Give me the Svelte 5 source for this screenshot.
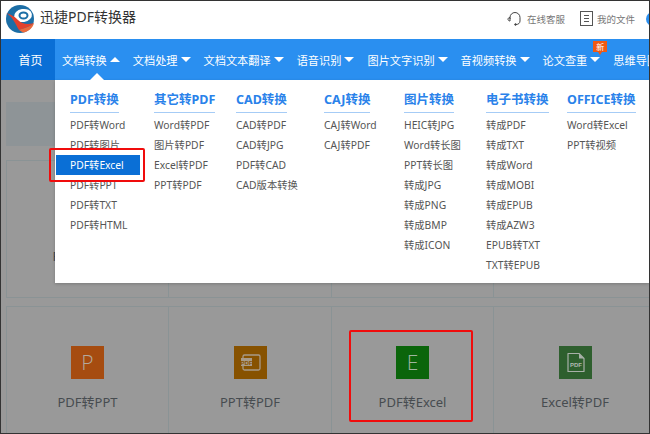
<script>
  const tabs = [
    { label: '文档转换', open: true },
    { label: '文档处理' },
    { label: '文档文本翻译' },
    { label: '语音识别' },
    { label: '图片文字识别' },
    { label: '音视频转换' },
    { label: '论文查重', badge: '新' }
  ];

  const groups = [
    { title: 'PDF转换', items: ['PDF转Word', 'PDF转图片', 'PDF转Excel', 'PDF转PPT', 'PDF转TXT', 'PDF转HTML'] },
    { title: '其它转PDF', items: ['Word转PDF', '图片转PDF', 'Excel转PDF', 'PPT转PDF'] },
    { title: 'CAD转换', items: ['CAD转PDF', 'CAD转JPG', 'PDF转CAD', 'CAD版本转换'] },
    { title: 'CAJ转换', items: ['CAJ转Word', 'CAJ转PDF'] },
    { title: '图片转换', items: ['HEIC转JPG', 'Word转长图', 'PPT转长图', '转成JPG', '转成PNG', '转成BMP', '转成ICON'] },
    { title: '电子书转换', items: ['转成PDF', '转成TXT', '转成Word', '转成MOBI', '转成EPUB', '转成AZW3', 'EPUB转TXT', 'TXT转EPUB'] },
    { title: 'OFFICE转换', items: ['Word转Excel', 'PPT转视频'] }
  ];
</script>

<div class="window">
  <header class="top">
    <svg class="logo" width="30" height="30" viewBox="0 0 30 30">
      <circle cx="15" cy="15" r="14" fill="#1c6ea6" />
      <ellipse cx="18" cy="11.5" rx="9" ry="6.5" fill="#fff" transform="rotate(-10 18 11.5)" />
      <ellipse cx="18.5" cy="11.5" rx="4" ry="3" fill="none" stroke="#1c6ea6" stroke-width="2" />
      <path d="M1 9C7 12 10 19 14 26C19 24 25 23 29 19C22 21 17 20 13 16C9 12 5 10 1 9Z" fill="#e2402c" />
      <path d="M14 26C19 24 25 23 29 19C28 24 23 28 18 28.500Z" fill="#ec6a3c" />
    </svg>
    <div class="title">迅捷PDF转换器</div>
    <div class="tools">
      <svg class="headset" width="16" height="16" viewBox="0 0 16 16" fill="none" stroke="#444" stroke-width="1">
        <path d="M3 8V6.500A5 5 0 0 1 13 6.500V10C13 12 11.500 13.500 9 13.500" />
        <path d="M3 6.500C1.500 6.500 1 7.500 1 8.300S1.800 10 3 10Z" />
        <circle cx="8.500" cy="13.500" r=".8" fill="#444" />
      </svg>
      <span class="tool-text">在线客服</span>
      <svg class="file" width="13" height="15" viewBox="0 0 13 15" fill="none" stroke="#555" stroke-width="1">
        <rect x=".5" y=".5" width="12" height="14" />
        <path d="M4 4.500H9M4 7.500H9M4 10.500H9" />
      </svg>
      <span class="tool-text">我的文件</span>
      <span class="avatar"></span>
    </div>
  </header>

  <nav class="nav">
    <div class="home">首页</div>
    {#each tabs as tab}
      <div class="tab">
        {tab.label}
        <span class="arrow" class:up={tab.open}></span>
        {#if tab.badge}
          <span class="badge">{tab.badge}</span>
        {/if}
      </div>
    {/each}
    <div class="tab">思维导图</div>
  </nav>

  <main class="page">
    <div class="band"></div>
    <div class="cards">
      <div class="card first"><span class="card-label">PDF转Word</span></div>
      <div class="card"></div>
      <div class="card"></div>
      <div class="card"></div>
    </div>
    <div class="cards">
      <div class="card tool">
        <div class="icon ppt">P</div>
        <div class="tool-name">PDF转PPT</div>
      </div>
      <div class="card tool">
        <div class="icon ppt-pdf">
          <svg width="33" height="33" viewBox="0 0 33 33" fill="none">
            <rect x="9" y="9" width="17" height="15" rx="1.500" stroke="#a89a88" stroke-width="1.300" />
            <rect x="7" y="12" width="11" height="8" fill="#a89a88" />
            <text x="12.500" y="18.500" text-anchor="middle" class="mini dark">PDF</text>
          </svg>
        </div>
        <div class="tool-name">PPT转PDF</div>
      </div>
      <div class="card tool">
        <div class="icon xls">E</div>
        <div class="tool-name">PDF转Excel</div>
      </div>
      <div class="card tool">
        <div class="icon xls-pdf">
          <svg width="33" height="33" viewBox="0 0 33 33" fill="none">
            <path d="M9 7.500H20L25 12.500V25.500H9Z" stroke="#a8b0a8" stroke-width="1.200" stroke-linejoin="round" />
            <path d="M20 7.500V12.500H25" fill="#a8b0a8" />
            <text x="17" y="21" text-anchor="middle" class="mini light">PDF</text>
          </svg>
        </div>
        <div class="tool-name">Excel转PDF</div>
      </div>
    </div>

    <div class="menu">
      <span class="notch"></span>
      {#each groups as group}
        <div class="group">
          <div class="group-title">{group.title}</div>
          {#each group.items as item}
            <div class="item" class:active={item === 'PDF转Excel'}>{item}</div>
          {/each}
        </div>
      {/each}
    </div>
  </main>

  <div class="mark mark-menu"></div>
  <div class="mark mark-card"></div>
</div>

<style>
  :global(body) {
    margin: 0;
  }
  .window {
    position: relative;
    box-sizing: border-box;
    width: 650px;
    height: 434px;
    overflow: hidden;
    display: flex;
    flex-direction: column;
    border: 1px solid #333;
    background: #999;
    font-family: "Noto Sans", "Noto Sans CJK SC", sans-serif;
  }
  .top {
    flex: none;
    height: 38px;
    background: #fff;
    display: flex;
    align-items: center;
    padding-left: 4px;
    padding-bottom: 3px;
    box-sizing: border-box;
  }
  .title {
    margin-left: 5px;
    padding-bottom: 5px;
    font-size: 14px;
    color: #333;
  }
  .tools {
    margin-left: auto;
    display: flex;
    align-items: center;
    height: 100%;
  }
  .tool-text {
    font-size: 9.500px;
    color: #777;
    margin-left: 4px;
    width: 40px;
  }
  .file {
    margin-left: 13px;
  }
  .avatar {
    width: 14px;
    height: 14px;
    margin-left: 9px;
    margin-right: -11px;
    border-radius: 50%;
    background: #2a8ff0;
  }
  .nav {
    flex: none;
    height: 41px;
    background: #2a8ff0;
    display: flex;
    align-items: center;
    color: #fff;
    font-size: 11.200px;
    white-space: nowrap;
  }
  .home {
    align-self: stretch;
    width: 54px;
    padding-left: 5px;
    box-sizing: border-box;
    flex: none;
    display: flex;
    align-items: center;
    justify-content: center;
    background: #0a6fd6;
    font-size: 12px;
  }
  .tab {
    position: relative;
    flex: none;
    display: flex;
    align-items: center;
    margin-left: 7px;
    margin-right: 6px;
  }
  .arrow {
    margin-left: 3px;
    width: 0;
    height: 0;
    border-left: 5px solid transparent;
    border-right: 5px solid transparent;
    border-top: 5px solid #fff;
  }
  .arrow.up {
    border-top: 0;
    border-bottom: 5px solid #fff;
  }
  .badge {
    position: absolute;
    right: -7px;
    top: -11px;
    width: 14px;
    height: 11px;
    background: #f05a14;
    font-size: 8px;
    line-height: 11px;
    text-align: center;
  }
  .badge::after {
    content: "";
    position: absolute;
    left: 5px;
    top: 11px;
    border-left: 2px solid transparent;
    border-right: 2px solid transparent;
    border-top: 3px solid #f05a14;
  }
  .page {
    position: relative;
    flex: 1;
    min-height: 0;
    padding: 22px 0 0 5px;
  }
  .band {
    height: 44px;
    width: 200px;
    background: #8e9497;
    margin-bottom: 14px;
  }
  .cards {
    display: grid;
    grid-template-columns: 162px 163px 162px 162px;
    height: 138px;
    border: 1px solid #8a9395;
    border-right: 0;
    box-sizing: border-box;
    margin-bottom: 8px;
  }
  .card {
    position: relative;
    border-right: 1px solid #8a9395;
    display: flex;
    flex-direction: column;
    align-items: center;
  }
  .card:last-child {
    border-right: 0;
  }
  .card.first {
    justify-content: center;
    padding-top: 52px;
    box-sizing: border-box;
  }
  .card-label {
    font-size: 13px;
    color: #3f4a50;
    white-space: nowrap;
  }
  .tool {
    padding-top: 39px;
  }
  .icon {
    width: 33px;
    height: 33px;
    font-size: 21px;
    font-weight: 300;
    line-height: 33px;
    text-align: center;
    font-family: "Open Sans", sans-serif;
    color: #b4a99c;
  }
  .icon svg {
    display: block;
  }
  .ppt {
    background: #a64c10;
  }
  .ppt-pdf {
    background: #875200;
  }
  .xls {
    background: #0b650b;
    color: #9fb59f;
  }
  .xls-pdf {
    background: #2e5f2e;
  }
  .mini {
    font-size: 6px;
    font-weight: 700;
    font-family: "Liberation Sans", sans-serif;
  }
  .mini.dark {
    fill: #875200;
  }
  .mini.light {
    fill: #b0b8b0;
  }
  .tool-name {
    margin-top: 13px;
    font-size: 13px;
    color: #474c50;
    white-space: nowrap;
  }
  .menu {
    position: absolute;
    left: 54px;
    right: 0;
    top: 0;
    height: 203px;
    box-sizing: border-box;
    background: #fff;
    box-shadow: 0 1px 3px rgba(0, 0, 0, .2);
    padding: 12px 0 0 15px;
    display: grid;
    grid-template-columns: 84px 82px 88px 80px 82px 81px auto;
  }
  .notch {
    position: absolute;
    left: 35px;
    top: -7px;
    width: 0;
    height: 0;
    border-left: 7px solid transparent;
    border-right: 7px solid transparent;
    border-bottom: 7px solid #fff;
  }
  .group-title {
    width: fit-content;
    font-size: 12.500px;
    font-weight: 700;
    line-height: 16px;
    padding-bottom: 4px;
    margin-bottom: 2px;
    color: #2a82ea;
    border-bottom: 1px solid #a6ccf6;
    white-space: nowrap;
  }
  .item {
    height: 20px;
    line-height: 20px;
    font-size: 10.300px;
    color: #555;
    white-space: nowrap;
  }
  .item.active {
    margin-left: -14px;
    width: 84px;
    padding-left: 14px;
    box-sizing: border-box;
    background: #0a6fd6;
    color: #fff;
  }
  .mark {
    position: absolute;
    box-sizing: border-box;
    border: 2px solid #f00c0c;
    border-radius: 2px;
  }
  .mark-menu {
    left: 48px;
    top: 147px;
    width: 96px;
    height: 34px;
  }
  .mark-card {
    left: 348px;
    top: 329px;
    width: 124px;
    height: 92px;
  }
</style>
